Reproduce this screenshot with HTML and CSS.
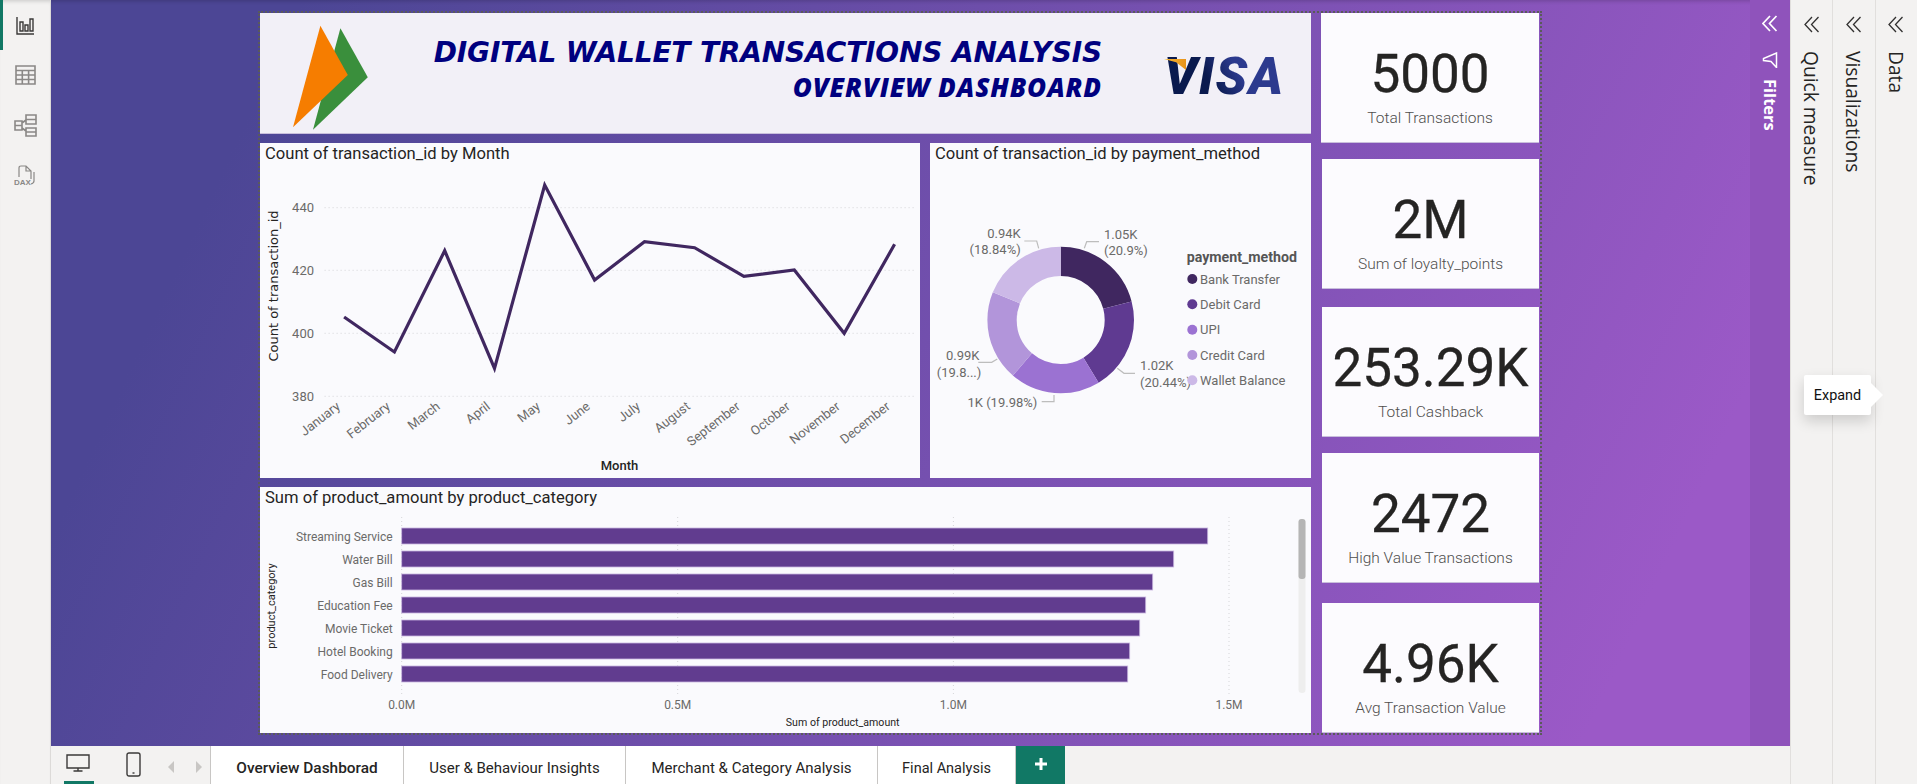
FILE: index.html
```html
<!DOCTYPE html>
<html lang="en">
<head>
<meta charset="utf-8">
<title>Digital Wallet Transactions Analysis</title>
<link rel="stylesheet" href="styles.css">
</head>
<body>
<div class="app">
  <nav class="rail">
    <div class="rail-item rail-active">
      <svg width="19" height="19" viewBox="0 0 19 19" class="ic-dark"><path d="M1 1V18H18M4 6H7V15H4ZM9 9H12V15H9ZM14 3H17V15H14Z"/></svg>
    </div>
    <div class="rail-item">
      <svg width="21" height="20" viewBox="0 0 21 20" class="ic-grey"><path d="M1 1H20V19H1ZM1 5.5H20M1 10H20M1 14.5H20M7.3 5.5V19M13.6 5.5V19"/></svg>
    </div>
    <div class="rail-item">
      <svg width="23" height="23" viewBox="0 0 23 23" class="ic-grey"><path d="M12 1H22V10H12ZM12 5.5H22M12 14H22V22H12ZM12 18H22M1 7H8V16H1ZM1 11.5H8M8 9L12 6M8 14L12 17"/></svg>
    </div>
    <div class="rail-item">
      <svg width="22" height="21" viewBox="0 0 22 21" class="ic-light"><path d="M5 12V3Q5 1 7 1H12L17 6V14M12 1V6H17M20 7V16Q20 18 17 19"/><text x="0" y="20" class="dax">DAX</text></svg>
    </div>
  </nav>

  <main class="main">
    <section class="canvas">
      <div class="report">
        <div class="col-left">
          <header class="card banner">
            <svg class="logo" width="76" height="106" viewBox="0 0 76 106">
              <polygon points="47.4,3.3 74.8,52.3 20,104.7" fill="#3a8f3c"/>
              <polygon points="27.4,.7 54.8,50 0,102.3" fill="#f67d00"/>
            </svg>
            <div class="banner-text">
              <h1 class="banner-l1">DIGITAL WALLET TRANSACTIONS ANALYSIS</h1>
              <h2 class="banner-l2">OVERVIEW DASHBOARD</h2>
            </div>
            <div class="visa">VISA</div>
          </header>

          <div class="row-mid">
            <article class="card chart-line">
              <h3 class="vis-title">Count of transaction_id by Month</h3>
              <svg class="plot" width="660" height="309" viewBox="0 26 660 309">
                <g class="grid">
                  <line x1="64.6" x2="655.7" y1="64.7" y2="64.7"/>
                  <line x1="64.6" x2="655.7" y1="127.3" y2="127.3"/>
                  <line x1="64.6" x2="655.7" y1="190.3" y2="190.3"/>
                  <line x1="64.6" x2="655.7" y1="253.3" y2="253.3"/>
                </g>
                <g class="tick tick-end">
                  <text x="54" y="69">440</text>
                  <text x="54" y="132">420</text>
                  <text x="54" y="195">400</text>
                  <text x="54" y="258">380</text>
                </g>
                <text class="axis-wide" transform="translate(18 143) rotate(-90)">Count of transaction_id</text>
                <polyline class="trend" points="84.1,174 134.4,209 184.7,107.7 234.5,225.3 284.7,42 334.6,137 384.5,98.7 434.6,104.7 483.9,133.3 534.3,127 584.2,190.3 634.6,101.3"/>
                <g class="tick tick-end">
                  <text transform="translate(81 265) rotate(-38)">January</text>
                  <text transform="translate(131 265) rotate(-38)">February</text>
                  <text transform="translate(181 265) rotate(-38)">March</text>
                  <text transform="translate(231 265) rotate(-38)">April</text>
                  <text transform="translate(281 265) rotate(-38)">May</text>
                  <text transform="translate(331 265) rotate(-38)">June</text>
                  <text transform="translate(381 265) rotate(-38)">July</text>
                  <text transform="translate(431 265) rotate(-38)">August</text>
                  <text transform="translate(481 265) rotate(-38)">September</text>
                  <text transform="translate(531 265) rotate(-38)">October</text>
                  <text transform="translate(581 265) rotate(-38)">November</text>
                  <text transform="translate(631 265) rotate(-38)">December</text>
                </g>
                <text class="axis-din" x="359.5" y="327">Month</text>
              </svg>
            </article>

            <article class="card chart-donut">
              <h3 class="vis-title">Count of transaction_id by payment_method</h3>
              <svg class="plot" width="381" height="309" viewBox="0 26 381 309">
                <g class="donut" transform="rotate(-90 130.7 177)">
                  <circle cx="130.7" cy="177" r="58.65" pathLength="100" stroke="#402760" stroke-dasharray="20.9 79.1" stroke-dashoffset="0"/>
                  <circle cx="130.7" cy="177" r="58.65" pathLength="100" stroke="#5f3a91" stroke-dasharray="20.44 79.56" stroke-dashoffset="-20.9"/>
                  <circle cx="130.7" cy="177" r="58.65" pathLength="100" stroke="#9b72d2" stroke-dasharray="19.98 80.02" stroke-dashoffset="-41.34"/>
                  <circle cx="130.7" cy="177" r="58.65" pathLength="100" stroke="#b295da" stroke-dasharray="19.84 80.16" stroke-dashoffset="-61.32"/>
                  <circle cx="130.7" cy="177" r="58.65" pathLength="100" stroke="#ccb9e7" stroke-dasharray="18.84 81.16" stroke-dashoffset="-81.16"/>
                </g>
                <g class="leader">
                  <polyline points="154.3,105.3 156.7,98.7 169,98.7"/>
                  <polyline points="187.3,225.3 194,230.3 205,230.3"/>
                  <polyline points="124,252 124,258.7 111.7,258.7"/>
                  <polyline points="67.3,216 61.7,219.3 48.3,219.3"/>
                  <polyline points="108.7,105.3 106.7,98 94.3,98"/>
                </g>
                <g class="tick">
                  <text x="174" y="96">1.05K</text>
                  <text x="174" y="112">(20.9%)</text>
                  <text x="210" y="227">1.02K</text>
                  <text x="210" y="244">(20.44%)</text>
                  <text x="16" y="217">0.99K</text>
                  <text x="6.7" y="234">(19.8...)</text>
                </g>
                <g class="tick tick-end">
                  <text x="107.3" y="264">1K (19.98%)</text>
                  <text x="90.7" y="95">0.94K</text>
                  <text x="90.7" y="111">(18.84%)</text>
                </g>
                <text class="legend-title" x="256.7" y="119">payment_method</text>
                <circle cx="262.3" cy="136" r="5" fill="#402760"/>
                <circle cx="262.3" cy="161.3" r="5" fill="#5f3a91"/>
                <circle cx="262.3" cy="186.7" r="5" fill="#9b72d2"/>
                <circle cx="262.3" cy="212" r="5" fill="#b295da"/>
                <circle cx="262.3" cy="237.3" r="5" fill="#ccb9e7"/>
                <g class="legend-item">
                  <text x="270" y="140.5">Bank Transfer</text>
                  <text x="270" y="165.8">Debit Card</text>
                  <text x="270" y="191.2">UPI</text>
                  <text x="270" y="216.5">Credit Card</text>
                  <text x="270" y="241.8">Wallet Balance</text>
                </g>
              </svg>
            </article>
          </div>

          <article class="card chart-bar">
            <h3 class="vis-title">Sum of product_amount by product_category</h3>
            <svg class="plot" width="1051" height="220" viewBox="0 26 1051 220">
              <g class="grid">
                <line x1="141.7" x2="141.7" y1="30" y2="208"/>
                <line x1="417.7" x2="417.7" y1="30" y2="208"/>
                <line x1="693.4" x2="693.4" y1="30" y2="208"/>
                <line x1="969" x2="969" y1="30" y2="208"/>
              </g>
              <g class="bars">
                <rect x="141.7" y="41" width="806" height="16"/>
                <rect x="141.7" y="64" width="772" height="16"/>
                <rect x="141.7" y="87" width="751" height="16"/>
                <rect x="141.7" y="110" width="744" height="16"/>
                <rect x="141.7" y="133" width="738" height="16"/>
                <rect x="141.7" y="156" width="728" height="16"/>
                <rect x="141.7" y="179" width="726" height="16"/>
              </g>
              <g class="tick tick-bar tick-end">
                <text x="132.7" y="53.500">Streaming Service</text>
                <text x="132.7" y="76.500">Water Bill</text>
                <text x="132.7" y="99.500">Gas Bill</text>
                <text x="132.7" y="122.500">Education Fee</text>
                <text x="132.7" y="145.500">Movie Ticket</text>
                <text x="132.7" y="168.500">Hotel Booking</text>
                <text x="132.7" y="191.500">Food Delivery</text>
              </g>
              <g class="tick tick-bar tick-mid">
                <text x="141.7" y="221.500">0.0M</text>
                <text x="417.7" y="221.500">0.5M</text>
                <text x="693.4" y="221.500">1.0M</text>
                <text x="969" y="221.500">1.5M</text>
              </g>
              <text class="axis-small" transform="translate(15 119) rotate(-90)">product_category</text>
              <text class="axis-foot" x="582.7" y="238.5">Sum of product_amount</text>
              <rect x="1038.5" y="32" width="7" height="174" rx="3.5" fill="#eeeeee"/>
              <rect x="1038.5" y="32" width="7" height="60" rx="3" fill="#b5b5b5"/>
            </svg>
          </article>
        </div>

        <aside class="col-kpi">
          <div class="kpi kpi-first"><div class="kpi-value">5000</div><div class="kpi-label">Total Transactions</div></div>
          <div class="kpi kpi-gap16"><div class="kpi-value">2M</div><div class="kpi-label">Sum of loyalty_points</div></div>
          <div class="kpi kpi-gap18"><div class="kpi-value">253.29K</div><div class="kpi-label">Total Cashback</div></div>
          <div class="kpi kpi-gap16"><div class="kpi-value">2472</div><div class="kpi-label">High Value Transactions</div></div>
          <div class="kpi kpi-gap20"><div class="kpi-value">4.96K</div><div class="kpi-label">Avg Transaction Value</div></div>
        </aside>
      </div>

      <div class="filters">
        <svg class="chev" width="16" height="17" viewBox="0 0 16 17"><path d="M8 1L1 8.500L8 16M14.500 1L7.500 8.500L14.500 16"/></svg>
        <svg class="funnel" width="16" height="16" viewBox="0 0 16 16"><path d="M14.500 1V15.500L9 9.500L1.500 8.500V6.500Z"/></svg>
        <span class="filters-label">Filters</span>
      </div>
    </section>

    <footer class="tabbar">
      <div class="view-btns">
        <div class="view-desktop">
          <svg width="24" height="18" viewBox="0 0 24 18" class="ic-dark"><path d="M1 1H23V14H1ZM12 14V17M7.500 17H16.500"/></svg>
        </div>
        <div class="view-phone">
          <svg width="15" height="25" viewBox="0 0 15 25" class="ic-dark"><rect x="1" y="1" width="13" height="23" rx="2"/><path d="M6.500 21H8.500"/></svg>
        </div>
        <span class="arrow arrow-left"></span>
        <span class="arrow arrow-right"></span>
      </div>
      <div class="tab tab-active">Overview Dashborad</div>
      <div class="tab tab-user">User &amp; Behaviour Insights</div>
      <div class="tab tab-merchant">Merchant &amp; Category Analysis</div>
      <div class="tab tab-final">Final Analysis</div>
      <div class="tab-add">
        <svg width="14" height="14" viewBox="0 0 14 14"><path d="M7 1V13M1 7H13"/></svg>
      </div>
    </footer>
  </main>

  <aside class="panes">
    <div class="pane">
      <svg class="chev-dark" width="16" height="17" viewBox="0 0 16 17"><path d="M8 1L1 8.500L8 16M14.500 1L7.500 8.500L14.500 16"/></svg>
      <span class="pane-label">Quick measure</span>
    </div>
    <div class="pane">
      <svg class="chev-dark" width="16" height="17" viewBox="0 0 16 17"><path d="M8 1L1 8.500L8 16M14.500 1L7.500 8.500L14.500 16"/></svg>
      <span class="pane-label">Visualizations</span>
    </div>
    <div class="pane">
      <svg class="chev-dark" width="16" height="17" viewBox="0 0 16 17"><path d="M8 1L1 8.500L8 16M14.500 1L7.500 8.500L14.500 16"/></svg>
      <span class="pane-label">Data</span>
    </div>
    <div class="tooltip">Expand</div>
  </aside>
</div>
</body>
</html>
```
FILE: styles.css
```css
* { box-sizing: border-box; }
html, body { margin: 0; padding: 0; height: 100%; overflow: hidden; }
body { font-family: "Roboto", "Liberation Sans", sans-serif; background: #f3f2f1; color: #252423; }

.app { display: flex; width: 1917px; height: 784px; }

/* left rail */
.rail { width: 51px; flex: none; background: #f3f2f1; border-right: 1px solid #dcdad8; display: flex; flex-direction: column; box-shadow: inset 0 4px 4px -3px rgba(0,0,0,.18); }
.rail-item { height: 50px; display: flex; align-items: center; justify-content: center; border-left: 3px solid transparent; padding-right: 3px; }
.rail-active { border-left-color: #117865; }
.ic-dark, .ic-grey, .ic-light { fill: none; }
.ic-dark path, .ic-dark rect { stroke: #3b3a39; stroke-width: 1.4; fill: none; }
.ic-grey path { stroke: #8a8886; stroke-width: 1.6; }
.ic-light path { stroke: #8a8886; stroke-width: 1.2; }
.dax { font: 700 8px "Liberation Sans", sans-serif; fill: #8a8886; }

/* main column */
.main { width: 1739px; flex: none; display: flex; flex-direction: column; }
.canvas { height: 746px; display: flex; background: linear-gradient(115deg, #4c4695 0%, #4c4695 12%, #9b59c7 90%, #9b59c7 100%); box-shadow: inset 0 4px 4px -3px rgba(0,0,0,.2); }

.report { width: 1280px; height: 720px; margin: 13px 0 0 209px; display: flex; outline: 2px dotted #5a5a5a; outline-offset: 0; flex: none; }
.col-left { width: 1051px; flex: none; display: flex; flex-direction: column; gap: 9px; }
.col-kpi { width: 217px; margin-left: 11px; flex: none; display: flex; flex-direction: column; }

.card { background: #fafafd; }

/* banner */
.banner { height: 121px; background: #f2f0f7; display: flex; border-bottom: 1px solid #c9bfdc; }
.logo { flex: none; margin: 12px 0 0 33px; }
.banner-text { flex: 1; text-align: right; padding-top: 22px; color: #00007f; font-style: italic; }
.banner-l1 { margin: 0; font: italic 700 28px/35px "DejaVu Sans", sans-serif; letter-spacing: -.15px; white-space: nowrap; }
.banner-l2 { margin: 0; font: italic 800 26px/34px "Open Sans", sans-serif; letter-spacing: .87px; white-space: nowrap; }
.visa { position: relative; flex: none; align-self: flex-start; margin: 43px 26px 0 62px; width: 121px; font: italic 900 52px/42px "Roboto", sans-serif; letter-spacing: 1.5px; background: linear-gradient(60deg, #0a1a4e 38%, #2c3a8e 62%); -webkit-background-clip: text; background-clip: text; color: transparent; }
.visa::before { content: ""; position: absolute; left: 0; top: 3px; width: 22px; height: 11px; background: linear-gradient(90deg, #f7b733, #e8931a); clip-path: polygon(0 0, 100% 0, 100% 100%, 55% 30%); }

/* charts */
.row-mid { display: flex; gap: 10px; height: 335px; }
.chart-line { width: 660px; flex: none; }
.chart-donut { width: 381px; flex: none; }
.chart-bar { height: 246px; }
.vis-title { margin: 0; height: 26px; padding: 1px 0 0 5px; font-size: 16.6px; line-height: 20px; font-weight: 400; color: #252423; white-space: nowrap; }
.plot { display: block; }

.grid line { stroke: #d5d5d8; stroke-width: 1; stroke-dasharray: 1 3; }
.tick text { font: 400 13px "Roboto", sans-serif; fill: #6b6a69; }
.tick-bar text { font-size: 12px; }
.tick-end text { text-anchor: end; }
.tick-mid text { text-anchor: middle; }
.trend { fill: none; stroke: #402760; stroke-width: 3.2; stroke-linejoin: miter; }
.axis-wide { font: 400 13px "DejaVu Sans", sans-serif; fill: #252423; text-anchor: middle; }
.axis-din { font: 500 13px "Roboto", sans-serif; fill: #252423; text-anchor: middle; }
.axis-small { font: 400 11px "Roboto", sans-serif; fill: #252423; text-anchor: middle; }
.axis-foot { font: 400 10.6px "Roboto", sans-serif; fill: #252423; text-anchor: middle; }
.donut circle { fill: none; stroke-width: 29.3; }
.leader polyline { fill: none; stroke: #bdbdbd; stroke-width: 1.2; }
.legend-title { font: 700 14.2px "Roboto", sans-serif; fill: #555; }
.legend-item text { font: 400 13px "Roboto", sans-serif; fill: #6b6a69; }
.bars rect { fill: #613c8f; stroke: #c7b4de; stroke-width: .8; }

/* KPI cards */
.kpi { height: 130px; background: #fcfbfe; display: flex; flex-direction: column; align-items: center; padding-top: 31px; border-bottom: 1px solid #c9bfdc; }
.kpi-first { margin-left: -1px; }
.kpi-gap16 { margin-top: 16px; }
.kpi-gap18 { margin-top: 18px; }
.kpi-gap20 { margin-top: 20px; }
.kpi-value { font-size: 53px; line-height: 60px; font-weight: 400; color: #252423; -webkit-text-stroke: .3px #252423; }
.kpi-label { margin-top: 4px; font-size: 15.5px; line-height: 20px; font-weight: 300; color: #4f4e4d; }

/* filters pane */
.filters { width: 40px; margin-left: auto; flex: none; background: #8f53bb; display: flex; flex-direction: column; align-items: center; padding-top: 15px; }
.chev path { fill: none; stroke: #fff; stroke-width: 1.7; }
.funnel { margin-top: 20px; }
.funnel path { fill: none; stroke: #fff; stroke-width: 1.5; }
.filters-label { margin-top: 11px; writing-mode: vertical-rl; font: 700 16.5px "Open Sans", sans-serif; color: #fff; }

/* tabs */
.tabbar { height: 38px; display: flex; background: #f3f2f1; }
.view-btns { width: 160px; flex: none; display: flex; border-right: 1px solid #c8c6c4; }
.view-desktop { margin-left: 13px; width: 30px; height: 38px; padding: 8px 0 0 2px; border-bottom: 3px solid #117865; }
.view-desktop svg, .view-phone svg { display: block; }
.view-phone { margin-left: 32px; padding-top: 6px; }
.arrow { width: 0; height: 0; margin-top: 15px; border-top: 6px solid transparent; border-bottom: 6px solid transparent; }
.arrow-left { margin-left: 27px; border-right: 6px solid #c8c6c4; }
.arrow-right { margin-left: 22px; border-left: 6px solid #c8c6c4; }
.tab { height: 38px; padding-top: 6px; display: flex; align-items: center; justify-content: center; flex: none; background: #fff; border-right: 1px solid #c8c6c4; font-size: 15px; color: #252423; white-space: nowrap; }
.tab-active { width: 193px; font-size: 15.4px; font-weight: 500; }
.tab-user { width: 222px; }
.tab-merchant { width: 252px; }
.tab-final { width: 138px; font-size: 14.5px; }
.tab-add { width: 49px; height: 38px; flex: none; background: #117865; display: flex; align-items: center; justify-content: center; padding-bottom: 3px; }
.tab-add path { stroke: #fff; stroke-width: 3; fill: none; }

/* right panes */
.panes { width: 127px; flex: none; display: flex; position: relative; }
.pane { flex: 1; border-left: 1px solid #e1dfdd; display: flex; flex-direction: column; align-items: center; padding-top: 16px; }
.chev-dark path { fill: none; stroke: #323130; stroke-width: 1.3; }
.pane-label { margin-top: 18px; writing-mode: vertical-rl; font: 400 19.2px "Open Sans", sans-serif; color: #252423; }
.tooltip { position: absolute; left: 14px; top: 375px; width: 67px; height: 40px; background: #fff; border-radius: 2px; box-shadow: 0 6px 14px rgba(0,0,0,.16); display: flex; align-items: center; justify-content: center; font-size: 14.4px; color: #111; }
.tooltip::after { content: ""; position: absolute; left: 100%; top: 8px; border-top: 12px solid transparent; border-bottom: 12px solid transparent; border-left: 12px solid #fff; }
```
